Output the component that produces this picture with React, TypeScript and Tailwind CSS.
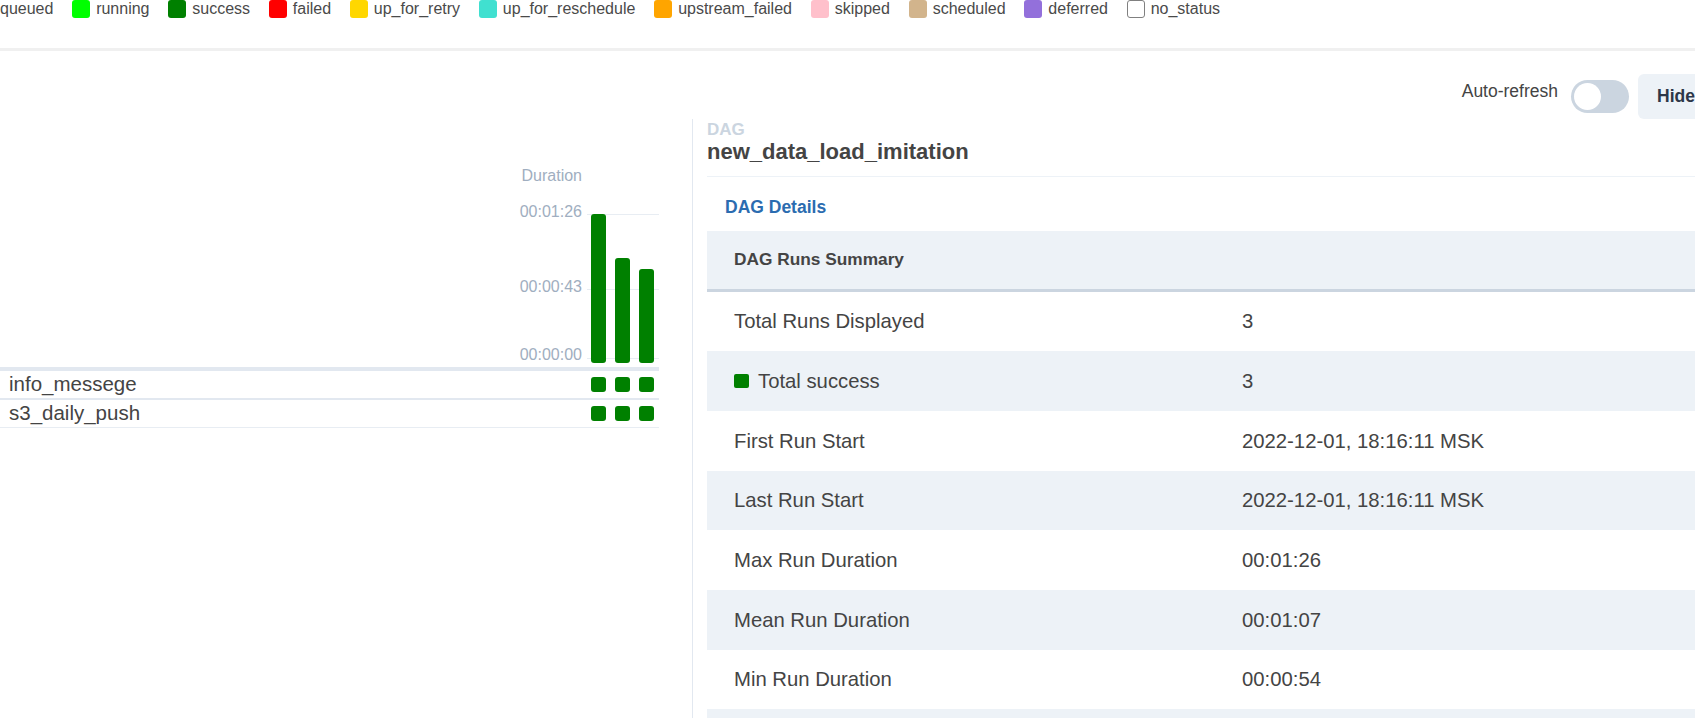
import React from "react";

const legend = [
  { label: "queued", color: "#808080" },
  { label: "running", color: "#00ff00" },
  { label: "success", color: "#008000" },
  { label: "failed", color: "#ff0000" },
  { label: "up_for_retry", color: "#ffd700" },
  { label: "up_for_reschedule", color: "#40e0d0" },
  { label: "upstream_failed", color: "#ffa500" },
  { label: "skipped", color: "#ffc0cb" },
  { label: "scheduled", color: "#d2b48c" },
  { label: "deferred", color: "#9370db" },
  { label: "no_status", color: "#ffffff" },
];

const rows: { label: string; value: string; dot?: boolean }[] = [
  { label: "Total Runs Displayed", value: "3" },
  { label: "Total success", value: "3", dot: true },
  { label: "First Run Start", value: "2022-12-01, 18:16:11 MSK" },
  { label: "Last Run Start", value: "2022-12-01, 18:16:11 MSK" },
  { label: "Max Run Duration", value: "00:01:26" },
  { label: "Mean Run Duration", value: "00:01:07" },
  { label: "Min Run Duration", value: "00:00:54" },
  { label: "", value: "" },
];

function Squares() {
  return (
    <div className="flex gap-[9px] mr-[5px]">
      <span className="w-[15px] h-[15px] rounded-[3px] bg-[#008000]" />
      <span className="w-[15px] h-[15px] rounded-[3px] bg-[#008000]" />
      <span className="w-[15px] h-[15px] rounded-[3px] bg-[#008000]" />
    </div>
  );
}

export default function App() {
  return (
    <div className="w-[1695px] h-[718px] overflow-hidden bg-white font-['Liberation_Sans',Arial,sans-serif]">
      <div className="w-[1800px]">
        {/* Legend */}
        <div className="h-[48px] border-b-[3px] border-[#f0f0f0] box-content">
          <div className="flex items-center h-[18px] -ml-[24px] gap-[18.75px] text-[16px] leading-none text-[#4a4a4a]">
            {legend.map((l) => (
              <div key={l.label} className="flex items-center gap-[6px]">
                <span
                  className={
                    l.label === "no_status"
                      ? "w-[18px] h-[18px] rounded-[3px] border border-[#808080] bg-white"
                      : "w-[18px] h-[18px] rounded-[3px]"
                  }
                  style={l.label === "no_status" ? undefined : { backgroundColor: l.color }}
                />
                <span>{l.label}</span>
              </div>
            ))}
          </div>
        </div>

        {/* Controls */}
        <div className="mt-[23px] h-[45px] flex items-center justify-end pr-[24px]">
          <span className="text-[17.5px] leading-none text-[#444] mb-[9px] mr-[13px]">Auto-refresh</span>
          <div className="w-[58px] h-[33px] rounded-full bg-[#cbd5e0] p-[3px] mr-[9px]">
            <div className="w-[27px] h-[27px] rounded-full bg-white" />
          </div>
          <div className="h-[45px] w-[138px] rounded-[6px] bg-[#edf2f7] flex items-center pl-[19px] text-[17.5px] font-bold text-[#2d3748]">
            Hide Details
          </div>
        </div>

        {/* Split */}
        <div className="flex">
          {/* Left panel */}
          <div className="w-[692px] shrink-0">
            <div className="h-[248px] flex justify-end items-end pr-[32px]">
              <svg width="180" height="217" viewBox="0 0 180 217" className="block">
                <text x="102" y="30.5" textAnchor="end" fontSize="16" fill="#a0aec0">Duration</text>
                <line x1="107" x2="179" y1="64.5" y2="64.5" stroke="#e8edf3" strokeWidth="1" />
                <line x1="107" x2="179" y1="139.5" y2="139.5" stroke="#e8edf3" strokeWidth="1" />
                <line x1="107" x2="179" y1="208.5" y2="208.5" stroke="#e8edf3" strokeWidth="1" />
                <text x="102" y="67" textAnchor="end" fontSize="16" fill="#a0aec0">00:01:26</text>
                <text x="102" y="142" textAnchor="end" fontSize="16" fill="#a0aec0">00:00:43</text>
                <text x="102" y="210" textAnchor="end" fontSize="16" fill="#a0aec0">00:00:00</text>
                <rect x="111" y="64" width="15" height="149" rx="3" fill="#008000" />
                <rect x="135" y="108" width="15" height="105" rx="3" fill="#008000" />
                <rect x="159" y="119" width="15" height="94" rx="3" fill="#008000" />
              </svg>
            </div>
            <div className="w-[659px] border-t-4 border-[#e2e8f0]">
              <div className="h-[29px] border-b-2 border-[#e2e8f0] flex items-center">
                <span className="flex-1 pl-[9px] text-[20.5px] leading-none text-[#444]">info_messege</span>
                <Squares />
              </div>
              <div className="h-[28px] border-b border-[#e8edf3] flex items-center">
                <span className="flex-1 pl-[9px] text-[20.5px] leading-none text-[#444]">s3_daily_push</span>
                <Squares />
              </div>
            </div>
          </div>

          {/* Right panel */}
          <div className="flex-1 border-l border-[#e2e8f0] pl-[14px] h-[700px]">
            <div className="pt-[2px] pb-[13.5px] border-b border-[#edf2f7]">
              <div className="text-[17px] leading-none font-bold text-[#cbd5e0]">DAG</div>
              <div className="mt-[2.5px] text-[22px] leading-none font-bold text-[#444]">new_data_load_imitation</div>
            </div>
            <div className="mt-[22px] pl-[18px] text-[17.5px] leading-none font-bold text-[#2b6cb0]">DAG Details</div>
            <div className="mt-[14px] w-[1016px]">
              <div className="h-[61px] bg-[#edf2f7] border-b-[3px] border-[#cbd5e0] flex items-center pl-[27px] text-[17.3px] leading-none font-bold text-[#444]">
                DAG Runs Summary
              </div>
              {rows.map((r, i) => (
                <div
                  key={i}
                  className={
                    i % 2 === 1
                      ? "h-[59.7px] bg-[#edf2f7] grid grid-cols-[508px_508px] items-center text-[20.3px] leading-none text-[#444]"
                      : "h-[59.7px] bg-white grid grid-cols-[508px_508px] items-center text-[20.3px] leading-none text-[#444]"
                  }
                >
                  <div className="pl-[27px] flex items-center gap-[9px]">
                    {r.dot && <span className="w-[15px] h-[14px] rounded-[2px] bg-[#008000]" />}
                    <span>{r.label}</span>
                  </div>
                  <div className="pl-[27px]">{r.value}</div>
                </div>
              ))}
            </div>
          </div>
        </div>
      </div>
    </div>
  );
}
